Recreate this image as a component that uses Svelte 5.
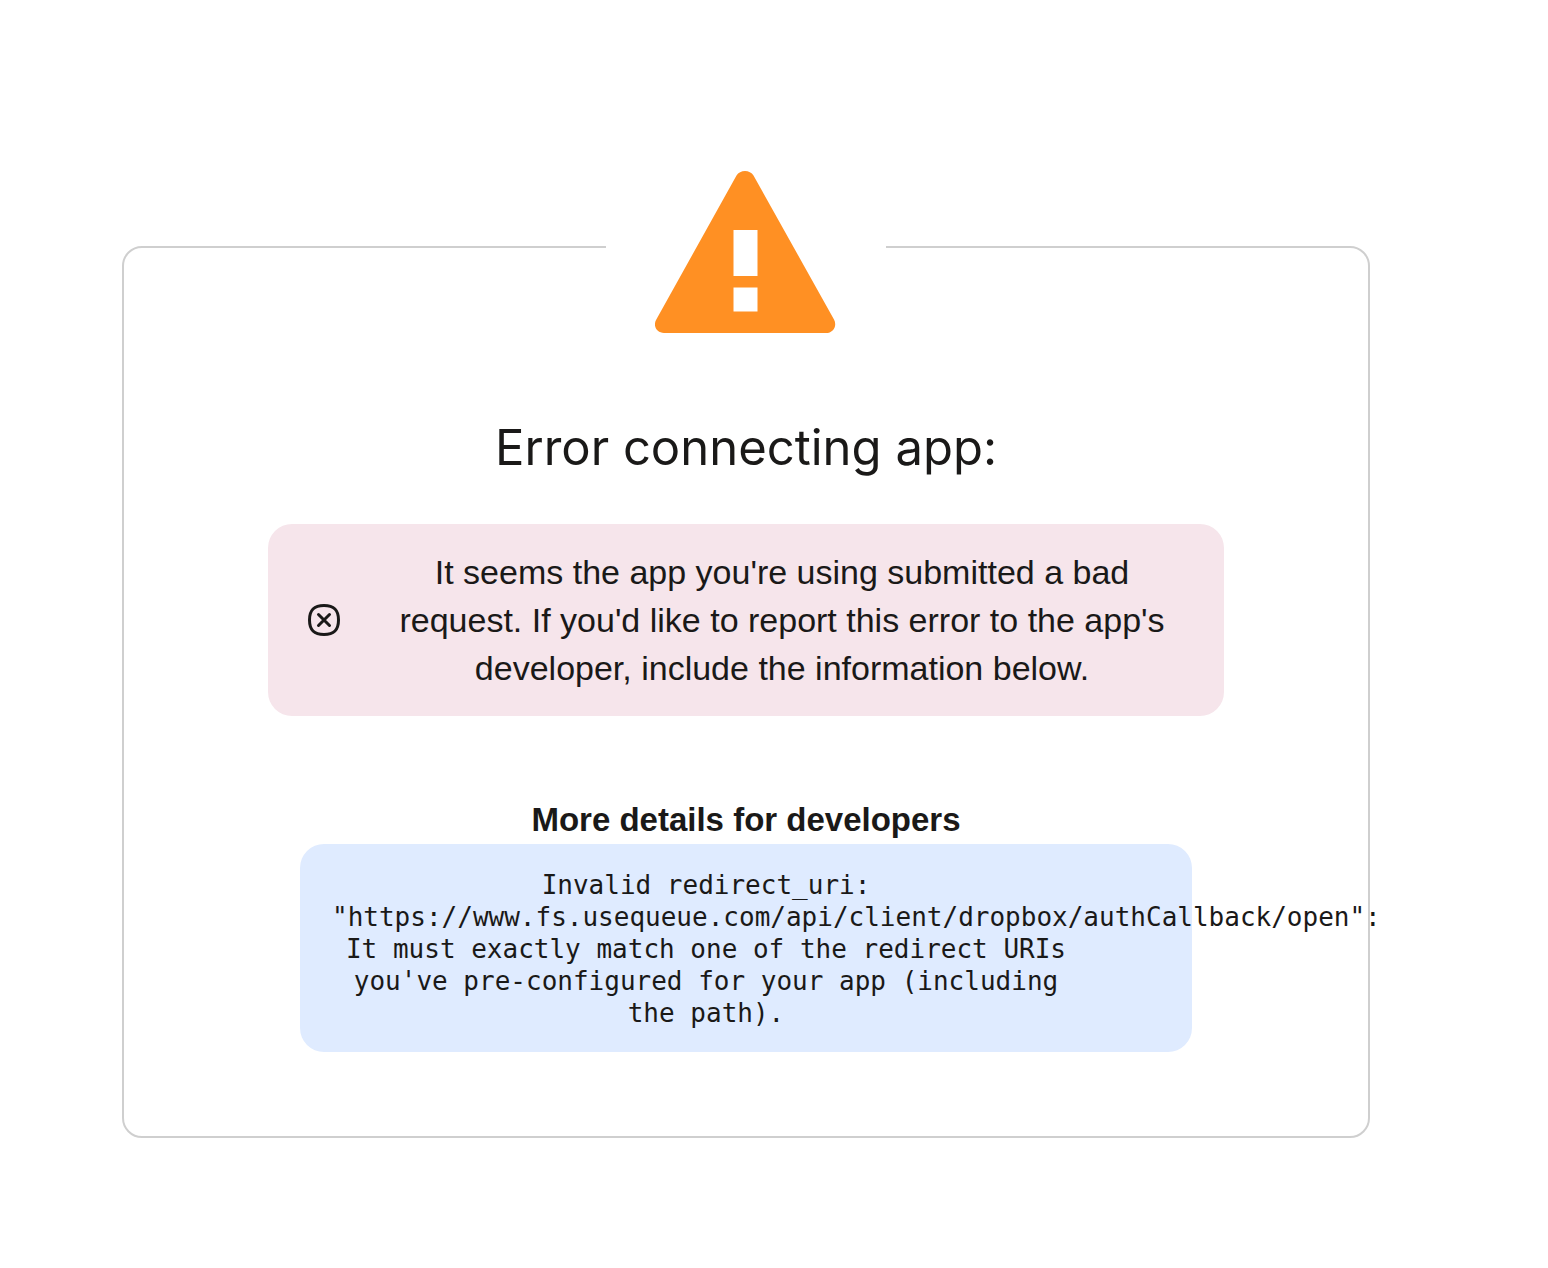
<script>
  const redirectUri = 'https://www.fs.usequeue.com/api/client/dropbox/authCallback/open';
</script>

<main class="page">
  <section class="card" aria-labelledby="error-title">
    <div class="badge">
      <svg class="warning" viewBox="0 0 182 162" aria-hidden="true">
        <path
          fill="#ff9023"
          fill-rule="evenodd"
          d="M81.500 4.500C85-1.500 95-1.500 98.500 4.500L179 148.500C182.500 155 178 162 171 162H9C2 162-2.500 155 1.300 148.500ZM78.500 59V105H102.500V59ZM78.500 116.500V140.500H102.500V116.500Z"
        />
      </svg>
    </div>

    <h1 id="error-title">Error connecting app:</h1>

    <div class="alert" role="alert">
      <svg class="fail" viewBox="0 0 32 32" fill="none" stroke="#1a1918" aria-hidden="true">
        <path
          stroke-width="3"
          d="M16 1.500C26 1.500 30.500 6 30.500 16S26 30.500 16 30.500 1.500 26 1.500 16 6 1.500 16 1.500Z"
        />
        <path stroke-width="3" stroke-linecap="round" d="M10.500 10.500L21.500 21.500M21.500 10.500L10.500 21.500" />
      </svg>
      <p>
        It seems the app you're using submitted a bad request. If you'd like to report this error to
        the app's developer, include the information below.
      </p>
    </div>

    <h2>More details for developers</h2>
    <div class="details">
      <code>
        Invalid redirect_uri: "{redirectUri}": It must exactly match one of the redirect URIs you've
        pre-configured for your app (including the path).
      </code>
    </div>
  </section>
</main>

<style>
  :global(body) {
    background: #fff;
  }

  .page {
    padding: 246px 178px 130px 122px;
    color: #1a1918;
    font-family: 'Liberation Sans', Arial, sans-serif;
    text-align: center;
  }

  .card {
    padding: 0 144px 84px;
    border: 2px solid #cfcfcf;
    border-radius: 20px;
  }

  .badge {
    display: flex;
    justify-content: center;
    width: 280px;
    margin: -77px auto 0;
    background: #fff;
  }

  .warning {
    width: 182px;
    height: 162px;
  }

  h1 {
    margin: 87px 0 48px;
    font: 400 49px/56px Inter, sans-serif;
  }

  .alert {
    display: flex;
    align-items: center;
    gap: 40px;
    padding: 24px 40px;
    border-radius: 24px;
    background: #f6e5eb;
  }

  .fail {
    flex: none;
    width: 32px;
    height: 32px;
  }

  p {
    flex: 1;
    margin: 0;
    font-size: 34px;
    line-height: 48px;
  }

  h2 {
    margin: 80px 0 0;
    font-size: 33px;
    line-height: 48px;
    font-weight: 700;
  }

  .details {
    margin: 0 32px;
    padding: 25px 112px 23px 32px;
    border-radius: 24px;
    background: #dfebff;
  }

  code {
    display: block;
    font: 26px/32px 'DejaVu Sans Mono', monospace;
  }
</style>
